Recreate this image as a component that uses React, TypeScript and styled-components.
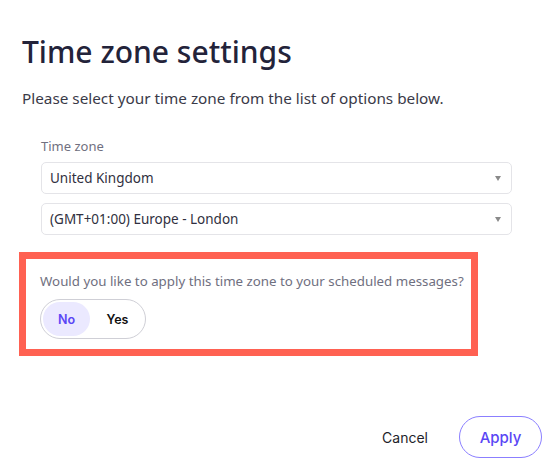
import React, { useState } from "react";
import styled, { createGlobalStyle } from "styled-components";

const Global = createGlobalStyle`
  html, body { margin: 0; padding: 0; background: #ffffff; }
  body { font-family: "Noto Sans", "Open Sans", sans-serif; }
  * { box-sizing: border-box; }
`;

const Page = styled.div`
  width: 554px;
  height: 470px;
  padding: 30px 12px 0 19px;
  display: flex;
  flex-direction: column;
`;

const Title = styled.h1`
  margin: 0 0 0 3px;
  font-size: 30px;
  line-height: 44px;
  font-weight: 500;
  color: #23233a;
`;

const Subtitle = styled.p`
  margin: 13px 0 0 3px;
  font-size: 15.3px;
  line-height: 22px;
  color: #3a3a48;
`;

const Fields = styled.div`
  margin: 28px 0 0 22px;
  width: 471px;
  display: flex;
  flex-direction: column;
  gap: 9px;
`;

const Label = styled.div`
  font-size: 13px;
  line-height: 18px;
  color: #707080;
  margin-bottom: -2px;
`;

const Select = styled.div`
  height: 32px;
  border: 1px solid #e4e4e8;
  border-radius: 5px;
  display: flex;
  align-items: center;
  justify-content: space-between;
  padding: 0 10px 0 8px;
  font-size: 13.5px;
  color: #303040;
`;

const Caret = styled.span`
  width: 0;
  height: 0;
  border-left: 3px solid transparent;
  border-right: 3px solid transparent;
  border-top: 5px solid #8a8a8a;
`;

const Highlight = styled.div`
  margin-top: 17px;
  width: 459px;
  height: 104px;
  border: 7px solid #ff6152;
  padding: 12px 0 0 14px;
  display: flex;
  flex-direction: column;
  gap: 8px;
`;

const Question = styled.div`
  font-size: 13.3px;
  line-height: 20px;
  color: #6f6f80;
  white-space: nowrap;
`;

const Toggle = styled.div`
  width: 106px;
  height: 40px;
  border: 1px solid #cfcfd6;
  border-radius: 20px;
  padding: 2px;
  display: flex;
  align-items: center;
  gap: 4px;
`;

const ToggleOption = styled.button<{ $active?: boolean }>`
  height: 34px;
  width: 47px;
  border: none;
  border-radius: 17px;
  background: ${(p) => (p.$active ? "#ebe9ff" : "transparent")};
  color: ${(p) => (p.$active ? "#5a46f5" : "#111111")};
  font-family: Inter, "Liberation Sans", sans-serif;
  font-weight: 600;
  font-size: 12.5px;
  cursor: pointer;
  padding: 0;
`;

const Footer = styled.div`
  margin-top: auto;
  margin-bottom: 12px;
  display: flex;
  justify-content: flex-end;
  align-items: center;
  gap: 31px;
`;

const CancelButton = styled.button`
  border: none;
  background: transparent;
  font-family: Inter, "Liberation Sans", sans-serif;
  font-size: 14px;
  color: #1e1e2a;
  padding: 0;
  cursor: pointer;
`;

const ApplyButton = styled.button`
  width: 83px;
  height: 42px;
  border: 1.5px solid #8b7fff;
  border-radius: 21px;
  background: #ffffff;
  color: #5a46f5;
  font-family: Inter, "Liberation Sans", sans-serif;
  font-size: 15px;
  font-weight: 500;
  cursor: pointer;
`;

export default function App() {
  const [apply, setApply] = useState(false);
  return (
    <>
      <Global />
      <Page>
        <Title>Time zone settings</Title>
        <Subtitle>Please select your time zone from the list of options below.</Subtitle>
        <Fields>
          <Label>Time zone</Label>
          <Select>
            <span>United Kingdom</span>
            <Caret />
          </Select>
          <Select>
            <span>(GMT+01:00) Europe - London</span>
            <Caret />
          </Select>
        </Fields>
        <Highlight>
          <Question>Would you like to apply this time zone to your scheduled messages?</Question>
          <Toggle>
            <ToggleOption $active={!apply} onClick={() => setApply(false)}>No</ToggleOption>
            <ToggleOption $active={apply} onClick={() => setApply(true)}>Yes</ToggleOption>
          </Toggle>
        </Highlight>
        <Footer>
          <CancelButton>Cancel</CancelButton>
          <ApplyButton>Apply</ApplyButton>
        </Footer>
      </Page>
    </>
  );
}
